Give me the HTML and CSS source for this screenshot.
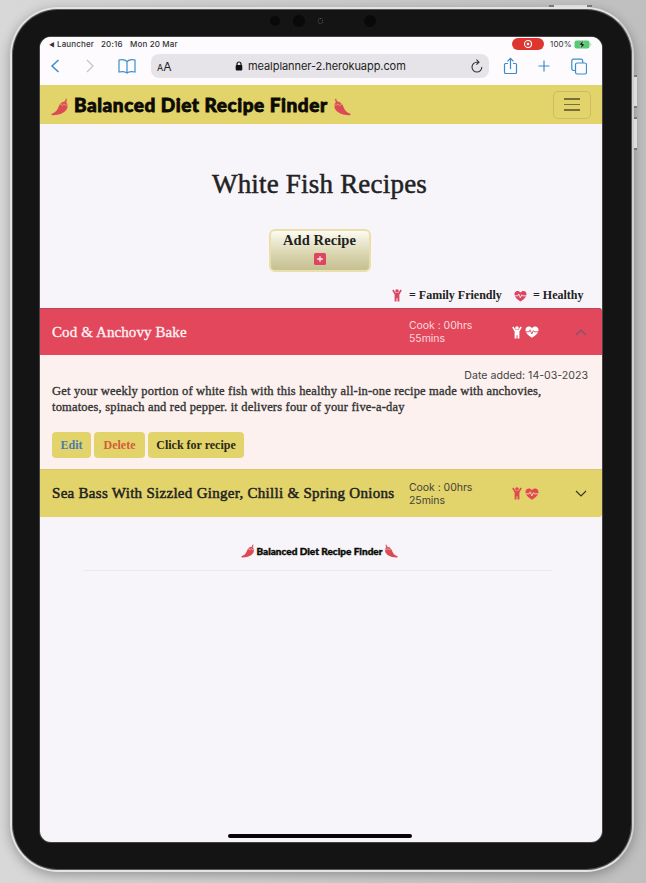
FILE: index.html
```
<!DOCTYPE html>
<html lang="en">
<head>
<meta charset="utf-8">
<title>Balanced Diet Recipe Finder</title>
<link rel="stylesheet" href="styles.css">
</head>
<body>
<svg class="defs" aria-hidden="true">
  <symbol id="pepper" viewBox="0 0 18 18"><path d="M11 4.500c3-.8 5.600.8 5.600 3.800C16.600 13.500 9.500 17.600.8 17.200l-.3-1.400C5 14.300 6 12.300 7.500 9 8.600 6.500 9.300 5 11 4.500z"/><path class="cap" d="M9.500 6.500 10.500 4l2.700-.6c.8-.5 1.200-1.400 1.100-2.500l1.500-.7c.6 1.500.3 2.900-.4 3.900l1.700 2.700-2.600.4-1.600-1.400-1.300 1.700z"/></symbol>
  <symbol id="child" viewBox="0 0 10 13"><circle cx="5" cy="2" r="1.800"/><path d="M.2 1.500 1.500.6 3.700 3.900h2.600L8.500.6l1.300.9-2.400 4V12.600H5.500V9.200h-1v3.400H2.600v-7.100z"/></symbol>
  <symbol id="heart" viewBox="0 0 14 12"><path d="M7 11.800C3.600 9.600.5 7 .5 4 .5 1.800 2 .5 3.800.5 5.200.5 6.300 1.200 7 2.200 7.700 1.200 8.800.5 10.200.5c1.800 0 3.300 1.300 3.300 3.500 0 3-3.100 5.600-6.500 7.800z"/><path class="pulse" d="M.5 5.800h3.600l1-2 1.700 4.200 1.500-3.400.7 1.200h4.500"/></symbol>
</svg>
<div class="device">
  <div class="buttons-top"></div>
  <div class="button-side power"></div>
  <div class="button-side volume"></div>
  <div class="cameras"><i></i><i class="big"></i><b></b><i class="big last"></i></div>
  <div class="screen">
    <div class="status">
      <span class="back">◀</span><span class="launcher">Launcher</span><span class="time">20:16</span><span class="date">Mon 20 Mar</span>
      <span class="record"><svg width="10" height="10" viewBox="0 0 10 10"><circle cx="5" cy="5" r="3.500"/><circle class="dot" cx="5" cy="5" r="1.300"/></svg></span>
      <span class="percent">100%</span>
      <svg class="battery" width="18" height="9" viewBox="0 0 18 9"><rect x=".5" y=".5" width="15" height="8" rx="2" fill="#52cc70"/><path d="M16.500 3v3c1-.3 1-2.700 0-3z" fill="#aaa"/><path d="M9.300.2 4.800 5h2.600l-.8 3.800L11.200 4H8.500z" fill="#111" stroke="#fff" stroke-width=".4"/></svg>
    </div>
    <div class="toolbar">
      <svg class="ic-back" width="10" height="14" viewBox="0 0 10 14"><path d="M8.500 1 2 7l6.500 6"/></svg>
      <svg class="ic-next" width="10" height="14" viewBox="0 0 10 14"><path d="m2 1 6 6-6 6"/></svg>
      <svg class="ic-book" width="18" height="15" viewBox="0 0 18 15"><path d="M9 2.500C7.500 1 4 .3 1 1v12c3-.7 6.500-.3 8 1 1.500-1.300 5-1.700 8-1V1c-3-.7-6.500 0-8 1.500zV14"/></svg>
      <div class="address">
        <span class="aa"><small>A</small>A</span>
        <span class="host"><svg width="8" height="10" viewBox="0 0 8 10"><rect x=".7" y="4" width="6.600" height="5.500" rx="1" fill="#111"/><path d="M2 4.500V3a2 2 0 0 1 4 0v1.500" fill="none" stroke="#111" stroke-width="1.200"/></svg><span>mealplanner-2.herokuapp.com</span></span>
        <svg class="reload" width="12" height="14" viewBox="0 0 12 14"><path d="M10.800 8A4.900 4.900 0 1 1 6 3.200h1.500M5.400.7 8 3.200 5.400 5.700"/></svg>
      </div>
      <svg class="ic-share" width="15" height="18" viewBox="0 0 15 18"><path d="M5 6.500H2.500c-.6 0-1 .4-1 1v8c0 .6.400 1 1 1h10c.6 0 1-.4 1-1v-8c0-.6-.4-1-1-1H10M7.500 12V1.500M4.500 4.300l3-3 3 3"/></svg>
      <svg class="ic-plus" width="12" height="12" viewBox="0 0 12 12"><path d="M6 .5v11M.5 6h11"/></svg>
      <svg class="ic-tabs" width="16" height="17" viewBox="0 0 16 17"><rect x="4.500" y="5" width="11" height="11" rx="1.800"/><path d="M4.500 12.500H2.700c-1 0-1.900-.8-1.900-1.900V3c0-1.100.9-1.900 1.900-1.900h7.100c1.100 0 1.900.8 1.900 1.900v2"/></svg>
    </div>
    <nav class="navbar">
      <svg class="pepper" width="18" height="18"><use href="#pepper"/></svg>
      <span class="brand">Balanced Diet Recipe Finder</span>
      <svg class="pepper flip" width="18" height="18"><use href="#pepper"/></svg>
      <button class="menu"><i></i><i></i><i></i></button>
    </nav>
    <main>
      <h1><span>White Fish Recipes</span></h1>
      <button class="add"><span>Add Recipe</span><svg width="12" height="12" viewBox="0 0 12 12"><rect width="12" height="12" rx="1.500" fill="#dc4662"/><path d="M6 3.200v5.600M3.200 6h5.600" stroke="#fbe8e8" stroke-width="1.300"/></svg></button>
      <div class="legend">
        <svg width="10" height="13"><use href="#child"/></svg><span class="family">= Family Friendly</span>
        <svg width="13" height="12"><use href="#heart"/></svg><span class="healthy">= Healthy</span>
      </div>
      <section class="accordion">
        <header class="row open">
          <h2 class="cod">Cod &amp; Anchovy Bake</h2>
          <p class="cook">Cook : 00hrs<br>55mins</p>
          <span class="tags"><svg width="10" height="13"><use href="#child"/></svg><svg width="14" height="12"><use href="#heart"/></svg></span>
          <svg class="chev" width="12" height="7" viewBox="0 0 12 7"><path d="m1 6 5-5 5 5"/></svg>
        </header>
        <div class="details">
          <p class="added">Date added: 14-03-2023</p>
          <p class="desc"><span class="l1">Get your weekly portion of white fish with this healthy all-in-one recipe made with anchovies,</span><br><span class="l2">tomatoes, spinach and red pepper. it delivers four of your five-a-day</span></p>
          <div class="actions"><button class="edit">Edit</button><button class="delete">Delete</button><button class="view">Click for recipe</button></div>
        </div>
        <header class="row closed">
          <h2 class="bass">Sea Bass With Sizzled Ginger, Chilli &amp; Spring Onions</h2>
          <p class="cook">Cook : 00hrs<br>25mins</p>
          <span class="tags"><svg width="10" height="13"><use href="#child"/></svg><svg width="14" height="12"><use href="#heart"/></svg></span>
          <svg class="chev" width="12" height="7" viewBox="0 0 12 7"><path d="m1 1 5 5 5-5"/></svg>
        </header>
      </section>
      <footer><svg class="pepper" width="14" height="14"><use href="#pepper"/></svg><span>Balanced Diet Recipe Finder</span><svg class="pepper flip" width="14" height="14"><use href="#pepper"/></svg></footer>
      <hr>
    </main>
    <div class="home"></div>
  </div>
</div>
</body>
</html>
```
FILE: styles.css
```
* { box-sizing: border-box; margin: 0; padding: 0; }
body { width: 646px; height: 883px; overflow: hidden; padding: 7px 12px 0 10px; font-family: Inter, "Liberation Sans", sans-serif; background: linear-gradient(90deg, #d8d8d8, #cdcdcd 50%, #bfbfbf); }
.defs { position: absolute; width: 0; height: 0; }
svg { flex: none; display: block; }
button { border: 0; font: inherit; flex: none; }
.device { position: relative; width: 624px; height: 865px; padding: 28px 0 0 28px; background: #141414; border: 2px solid #e4e4e4; border-right-color: #d0d0d0; border-radius: 48px; box-shadow: 0 3px 12px rgba(0,0,0,.3), inset 0 0 0 1px #555; }
.buttons-top { position: absolute; left: 537px; top: -4px; width: 43px; height: 2px; border: solid #777; border-width: 0 5px; background: #ddd; }
.button-side { position: absolute; left: 622px; width: 3px; height: 33px; background: #ddd; border: solid #777; border-width: 2px 0; }
.power { top: 66px; }
.volume { top: 108px; }
.cameras { position: absolute; top: 6px; left: 258px; width: 110px; height: 12px; display: flex; align-items: center; }
.cameras i { width: 10px; height: 10px; border-radius: 50%; background: #090909; margin-right: 13px; }
.cameras .big { width: 12px; height: 12px; }
.cameras b { width: 5px; height: 6px; border: 1px dotted #555; border-radius: 2px; }
.cameras .last { margin: 0 0 0 41px; }
.screen { width: 562px; height: 805px; display: flex; flex-direction: column; background: #f7f5f9; border-radius: 11px; overflow: hidden; box-shadow: 0 0 0 1px #444; color: #222; }
.status { height: 14px; flex: none; display: flex; align-items: center; background: #fdfbfe; font-size: 8px; letter-spacing: .15px; padding: 0 10px 0 9px; font-weight: 500; color: #333; }
.back { font-size: 6px; width: 8px; }
.launcher { width: 44px; }
.time { width: 29px; }
.date { flex: 1; }
.record { width: 32px; height: 12px; background: #df352f; border-radius: 6px; display: flex; align-items: center; justify-content: center; margin-right: 6px; }
.record svg { fill: none; stroke: #fff; stroke-width: 1.1; }
.record .dot { fill: #fff; stroke: none; }
.percent { width: 24px; font-weight: 400; }
.toolbar { height: 34px; flex: none; display: flex; align-items: center; background: #fdfbfe; padding: 0 14px 4px 10px; }
.toolbar svg { fill: none; stroke: #3a8dcc; stroke-width: 1.2; }
.toolbar .ic-back { stroke-width: 1.5; }
.toolbar .ic-next { stroke: #c4c2c8; margin-left: 25px; }
.ic-book { margin-left: 23px; }
.address { display: flex; align-items: center; width: 338px; height: 24px; margin-left: 15px; padding: 0 6px; border-radius: 8px; background: #e6e4e8; }
.aa { font-size: 12px; width: 78px; color: #222; }
.aa small { font-size: 9px; }
.host { flex: 1; display: flex; align-items: center; gap: 5px; font-size: 11px; letter-spacing: -.07px; color: #222; white-space: nowrap; }
.toolbar .host svg { stroke: none; }
.toolbar .reload { stroke: #333; stroke-width: 1.1; }
.ic-share { margin-left: 14px; }
.ic-plus { margin-left: 20px; }
.ic-tabs { margin-left: 21px; }
.navbar { height: 39px; flex: none; display: flex; align-items: center; background: #e2d46b; padding: 0 11px 0 11px; }
.pepper { fill: #dc4b55; --cap: #e2d46b; }
.cap { stroke: var(--cap); stroke-width: .6; }
.flip { transform: scaleX(-1); }
.navbar .pepper { margin-top: 4px; }
.brand, footer span { font-family: Lato, sans-serif; font-weight: 900; color: #0c0b05; -webkit-text-stroke: .8px #0c0b05; white-space: nowrap; }
.brand { font-size: 19px; margin: -1px 6px 0 5px; width: 253px; letter-spacing: .53px; }
.menu { width: 38px; height: 28px; border: 1px solid #cbbd5f; border-radius: 5px; background: none; margin-left: auto; display: flex; flex-direction: column; align-items: center; justify-content: center; gap: 4px; }
.menu i { width: 16px; height: 1.5px; background: #777039; }
main { display: flex; flex-direction: column; height: 718px; font-family: "Liberation Serif", serif; }
h1 { font-weight: 400; font-size: 27px; line-height: 32px; height: 32px; margin: 44px 0 29px; padding-right: 3px; text-align: center; -webkit-text-stroke: .5px #222; letter-spacing: .2px; }
.add { align-self: center; margin-right: 3px; width: 102px; height: 43px; display: flex; flex-direction: column; align-items: center; gap: 4px; padding-top: 1px; border: 2px solid #e8dfab; border-radius: 6px; background: linear-gradient(#fcfbf1, #d9d4ad 60%, #c5bf92); font-size: 14.5px; font-weight: 700; line-height: 17px; color: #222; letter-spacing: .1px; }
.legend { height: 36px; display: flex; align-items: center; padding: 11px 0 0 352px; font-size: 12px; font-weight: 700; white-space: nowrap; fill: #dc4662; --pulse: #f7f5f9; }
.pulse { fill: none; stroke: var(--pulse); stroke-width: .9; }
.family { margin: 0 12px 0 7px; width: 93px; }
.healthy { margin-left: 6px; }
.row { display: grid; grid-template-columns: 357px 103px 63px 12px; align-items: center; padding-left: 12px; height: 47px; }
.row h2 { font-size: 15px; font-weight: 400; white-space: nowrap; }
.open { background: #e2475c; color: #fff1f2; border-top: 1px solid #b8485d; border-radius: 0 3px 0 0; }
.closed { height: 48px; background: #e2d46b; border-top: 1px solid #d5c86d; border-radius: 0 0 3px 0; }
.cod { -webkit-text-stroke: .35px #fff1f2; letter-spacing: .1px; }
.bass { -webkit-text-stroke: .5px #222; letter-spacing: .29px; }
.cook, .added { font-family: Inter, sans-serif; font-size: 10.5px; line-height: 13px; color: #45423a; }
.cook { letter-spacing: -.05px; }
.open .cook { color: #ffd8dc; }
.tags { display: flex; align-items: center; gap: 3px; fill: #e04b52; --pulse: #f4dc9a; }
.open .tags { fill: #fff; --pulse: #e2475c; }
.chev { fill: none; stroke: #39361f; stroke-width: 1.2; }
.open .chev { stroke: #765570; }
.details { height: 114px; background: #fcf1ef; padding: 14px 14px 0 12px; }
.added { text-align: right; font-size: 10.6px; color: #444; }
.desc { font-size: 12.5px; letter-spacing: .18px; line-height: 16px; margin-top: 1px; white-space: nowrap; color: #333; -webkit-text-stroke: .35px #333; }
.actions { display: flex; gap: 3px; margin-top: 17px; font-size: 12px; font-weight: 700; }
.actions button { height: 26px; border-radius: 4px; background: #e2d46b; color: #2b2915; }
.actions .edit { width: 39px; color: #4a7dab; }
.actions .delete { width: 51px; color: #d55b38; }
.actions .view { width: 96px; }
footer { display: flex; align-items: center; justify-content: center; gap: 2px; margin-top: 25px; height: 17px; padding-right: 3px; }
footer .pepper { --cap: #f7f5f9; }
footer span { font-size: 10px; -webkit-text-stroke-width: .4px; }
hr { border: 0; height: 1px; background: #eceaee; margin: 11px 49px 0 43px; }
.home { position: absolute; left: 216px; top: 825px; width: 184px; height: 4px; border-radius: 2px; background: #080306; }
```
